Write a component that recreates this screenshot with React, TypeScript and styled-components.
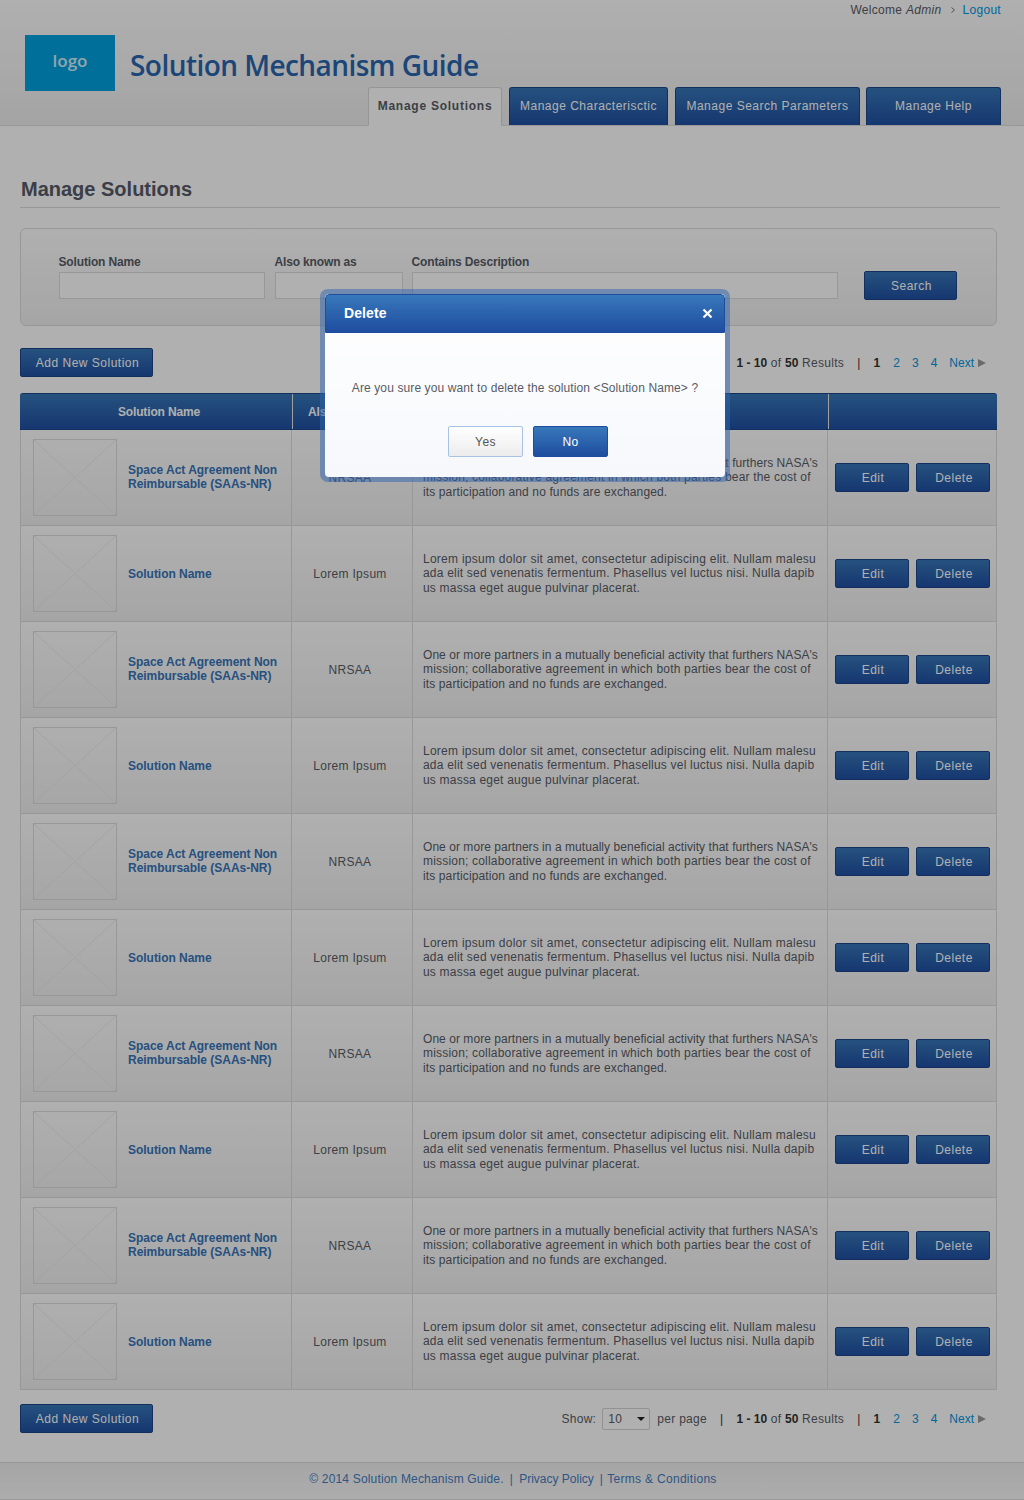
import React from "react";
import styled, { createGlobalStyle } from "styled-components";

const GlobalStyle = createGlobalStyle`
  * { box-sizing: border-box; }
  html, body { margin: 0; padding: 0; background: #fff; }
  body {
    font-family: "Liberation Sans", Arial, sans-serif;
    font-size: 12px;
    color: #585c66;
    letter-spacing: 0.3px;
  }
  a { text-decoration: none; }
`;

const Page = styled.div`
  position: relative;
  width: 1024px;
  height: 1500px;
  overflow: hidden;
`;

const Masthead = styled.header`
  height: 126px;
  background: linear-gradient(#ffffff, #eeeeee);
  border-bottom: 1px solid #dcdcdc;
`;

const TopBar = styled.div`
  height: 35px;
  padding: 3px 23px 0 0;
  display: flex;
  justify-content: flex-end;
  align-items: flex-start;
  line-height: 15px;
`;

const TopArrow = styled.svg`
  margin: 4px 7px 0 10px;
`;

const BlueLink = styled.a`
  color: #0095e0;
`;

const BrandRow = styled.div`
  height: 52px;
  padding-left: 25px;
  display: flex;
  align-items: flex-start;
`;

const Logo = styled.div`
  width: 90px;
  height: 56px;
  flex: none;
  background: #00a2e1;
  color: rgba(255, 255, 255, 0.85);
  font: 600 17px/51px "Open Sans", sans-serif;
  letter-spacing: 0;
  text-align: center;
`;

const SiteTitle = styled.h1`
  margin: 10px 0 0 15px;
  font: 600 28px/40px "Open Sans", sans-serif;
  letter-spacing: -0.55px;
  color: #2a66ae;
`;

const TabRow = styled.nav`
  height: 39px;
  padding-right: 23px;
  display: flex;
  justify-content: flex-end;
  gap: 7px;
`;

const Tab = styled.a<{ $active?: boolean; $width: number }>`
  width: ${(p) => p.$width}px;
  height: ${(p) => (p.$active ? 39 : 38)}px;
  display: flex;
  align-items: center;
  justify-content: center;
  padding-bottom: 1px;
  border-radius: 3px 3px 0 0;
  letter-spacing: ${(p) => (p.$active ? 0.75 : 0.5)}px;
  background: ${(p) => (p.$active ? "#ffffff" : "linear-gradient(#3777b8, #2050a3)")};
  border: 1px solid ${(p) => (p.$active ? "#d8d8d8" : "#1c4488")};
  border-bottom: ${(p) => (p.$active ? "1px solid #fff" : "0")};
  color: ${(p) => (p.$active ? "#585c66" : "#fff")};
  font-weight: ${(p) => (p.$active ? "bold" : "normal")};
  &:last-child { margin-left: -1px; }
`;

const Main = styled.main`
  padding: 0 27px 0 20px;
`;

const PageHeading = styled.h2`
  width: 980px;
  height: 82px;
  margin: 0 0 20px;
  padding: 50px 0 0 1px;
  border-bottom: 1px solid #dcdcdc;
  font: bold 20px/26px "Liberation Sans", Arial, sans-serif;
  letter-spacing: 0;
  color: #565a68;
`;

const SearchPanel = styled.section`
  height: 98px;
  padding: 26px 39px 0 38px;
  display: flex;
  align-items: flex-start;
  gap: 10px;
  border: 1px solid #dcdcdc;
  border-radius: 6px;
  background: linear-gradient(#ffffff, #f0f0f0);
`;

const Field = styled.label<{ $width: number }>`
  width: ${(p) => p.$width}px;
  display: block;
  flex: none;
  font-weight: bold;
  line-height: 14px;
  letter-spacing: -0.15px;
  text-indent: -0.5px;
  &:nth-child(2) { margin-right: -1px; }
`;

const TextBox = styled.div`
  height: 27px;
  margin-top: 3px;
  border: 1px solid #dcdcdc;
  background: #fff;
`;

const Button = styled.button<{ $width: number }>`
  width: ${(p) => p.$width}px;
  height: 29px;
  flex: none;
  padding: 1px 0 0 2px;
  border: 1px solid #1c4488;
  border-radius: 2px;
  background: linear-gradient(#3777b8, #2050a3);
  color: #fff;
  font: 12px "Liberation Sans", Arial, sans-serif;
  letter-spacing: 0.5px;
`;

const SearchButton = styled(Button)`
  margin: 16px 0 0 16px;
`;

const ToolRow = styled.div<{ $last?: boolean }>`
  height: 29px;
  margin: ${(p) => (p.$last ? "14px 0 0" : "22px 0 16px")};
  display: flex;
  align-items: center;
  justify-content: space-between;
`;

const Pager = styled.div`
  display: flex;
  align-items: center;
  padding-right: 11px;
`;

const PagerSplit = styled.span`
  margin: 0 13px;
  color: #333;
`;

const PagerStrong = styled.b`
  color: #333;
  letter-spacing: 0;
`;

const PageNumber = styled.span`
  margin-left: 12px;
  color: #0095e0;
  letter-spacing: 0;
`;

const CurrentPage = styled(PageNumber)`
  margin: 0 1px 0 0;
  color: #333;
  font-weight: bold;
`;

const NextArrow = styled.svg`
  margin-left: 4px;
`;

const SelectBox = styled.div`
  width: 48px;
  height: 22px;
  margin-left: 6px;
  padding: 0 4px 0 5px;
  display: flex;
  align-items: center;
  justify-content: space-between;
  border: 1px solid #d4d4d4;
  border-radius: 2px;
`;

const ShowText = styled.span`
  margin-left: 7px;
`;

const HeadRow = styled.div`
  height: 37px;
  display: grid;
  grid-template-columns: 272px 121px 415px 1fr;
  border-radius: 3px 3px 0 0;
  border: 1px solid #1c4488;
  border-width: 1px 0;
  background: linear-gradient(#3777b8, #2050a3);
`;

const HeadCell = styled.div`
  display: flex;
  align-items: center;
  justify-content: center;
  padding-top: 1px;
  color: #fff;
  font-weight: bold;
  letter-spacing: -0.15px;
  white-space: nowrap;
  & + & { border-left: 1px solid #e8e8e8; }
  &:first-child { padding-left: 6px; }
  &:nth-child(2) { padding-right: 8px; }
`;

const Row = styled.div`
  height: 96px;
  display: grid;
  grid-template-columns: 270px 121px 415px 1fr;
  border: 1px solid #dcdcdc;
  border-top: 0;
  background: linear-gradient(#ffffff, #f0f0f0);
`;

const NameCell = styled.div`
  padding: 0 0 1px 12px;
  display: flex;
  align-items: center;
  gap: 11px;
`;

const Thumb = styled.svg`
  flex: none;
  display: block;
`;

const SolutionLink = styled.a<{ $single: boolean }>`
  display: block;
  padding-top: ${(p) => (p.$single ? 2 : 0)}px;
  color: #3674b8;
  font-weight: bold;
  line-height: 14px;
  letter-spacing: -0.03px;
`;

const AkaCell = styled.div`
  display: flex;
  align-items: center;
  justify-content: center;
  border-left: 1px solid #dcdcdc;
  padding: 1px 4px 0 0;
`;

const DescCell = styled.div`
  display: flex;
  align-items: center;
  padding: 0.2px 0 0 10px;
  border-left: 1px solid #dcdcdc;
  line-height: 14.4px;
  white-space: nowrap;
`;

const DescLine = styled.div<{ $track: number }>`
  letter-spacing: ${(p) => p.$track}px;
`;

const ActionCell = styled.div`
  display: flex;
  align-items: center;
  gap: 7px;
  padding-left: 7px;
  border-left: 1px solid #dcdcdc;
`;

const Footer = styled.footer`
  height: 38px;
  margin-top: 29px;
  display: flex;
  align-items: center;
  justify-content: center;
  gap: 6px;
  padding: 0 0 4px 2px;
  border-top: 1px solid #dcdcdc;
  border-bottom: 1px solid #dcdcdc;
  background: linear-gradient(#f0f0f0, #fafafa);
  color: #447dc2;
`;

const FooterLink = styled.a<{ $track: number }>`
  color: #447dc2;
  letter-spacing: ${(p) => p.$track}px;
  &:last-child { margin-left: -2px; }
`;

const Overlay = styled.div`
  position: absolute;
  inset: 0;
  background: rgba(0, 0, 0, 0.31);
`;

const ModalFrame = styled.div`
  position: absolute;
  left: 320px;
  top: 289px;
  width: 410px;
  height: 193px;
  padding: 5px;
  border-radius: 8px;
  background: rgba(48, 100, 175, 0.5);
`;

const ModalBox = styled.div`
  height: 100%;
  border-radius: 4px;
  overflow: hidden;
  background: linear-gradient(#ffffff, #f6f8fc);
`;

const ModalHead = styled.div`
  height: 39px;
  padding: 0 11px 1px 18px;
  display: flex;
  align-items: center;
  justify-content: space-between;
  border: 1px solid #1e4d9f;
  border-radius: 4px 4px 0 0;
  background: linear-gradient(#3878bb, #1e4d9f);
  color: #fff;
  font-size: 14px;
  font-weight: bold;
  letter-spacing: 0.1px;
`;

const ModalText = styled.p`
  margin: 48px 0 31px;
  line-height: 14px;
  text-align: center;
  letter-spacing: 0.11px;
  color: #585c66;
`;

const ModalActions = styled.div`
  padding-left: 6px;
  display: flex;
  justify-content: center;
  gap: 10px;
`;

const YesButton = styled.button`
  width: 75px;
  height: 31px;
  padding: 0;
  border: 1px solid #a6c3e6;
  border-radius: 2px;
  background: linear-gradient(#ffffff, #ececec);
  color: #555;
  font: 12px "Liberation Sans", Arial, sans-serif;
  letter-spacing: 0.4px;
`;

const NoButton = styled(YesButton)`
  border-color: #1e4d9f;
  background: linear-gradient(#3878bb, #1e4d9f);
  color: #fff;
`;

// tracking per line: the reference's hinted Arial runs a different width on each line
const descriptions = {
  space: [
    { text: "One or more partners in a mutually beneficial activity that furthers NASA's", track: 0.05 },
    { text: "mission; collaborative agreement in which both parties bear the cost of", track: 0.19 },
    { text: "its participation and no funds are exchanged.", track: 0.12 },
  ],
  lorem: [
    { text: "Lorem ipsum dolor sit amet, consectetur adipiscing elit. Nullam malesu", track: 0.26 },
    { text: "ada elit sed venenatis fermentum. Phasellus vel luctus nisi. Nulla dapib", track: 0.2 },
    { text: "us massa eget augue pulvinar placerat.", track: 0.2 },
  ],
};

const rows = Array.from({ length: 10 }, (_, i) => i);

const ThumbIcon = () => (
  <Thumb width="84" height="77" viewBox="0 0 84 77">
    <rect x="0.5" y="0.5" width="83" height="76" fill="none" stroke="#dcdcdc" />
    <path d="M1 1L83 76M83 1L1 76" stroke="#ececec" fill="none" />
  </Thumb>
);

const Pagination = () => (
  <>
    <span>
      <PagerStrong>1 - 10</PagerStrong> of <PagerStrong>50</PagerStrong> Results
    </span>
    <PagerSplit>|</PagerSplit>
    <CurrentPage>1</CurrentPage>
    <PageNumber>2</PageNumber>
    <PageNumber>3</PageNumber>
    <PageNumber>4</PageNumber>
    <PageNumber>Next</PageNumber>
    <NextArrow width="8" height="8" viewBox="0 0 8 8">
      <path d="M0 0L8 4L0 8Z" fill="#9a9a9a" />
    </NextArrow>
  </>
);

const App: React.FC = () => {
  return (
    <Page>
      <GlobalStyle />
      <Masthead>
        <TopBar>
          <span>
            Welcome <em>Admin</em>
          </span>
          <TopArrow width="4" height="6" viewBox="0 0 4 6">
            <path d="M0.5 0.5L3.5 3L0.5 5.5" stroke="#777" fill="none" />
          </TopArrow>
          <BlueLink href="#">Logout</BlueLink>
        </TopBar>
        <BrandRow>
          <Logo>logo</Logo>
          <SiteTitle>Solution Mechanism Guide</SiteTitle>
        </BrandRow>
        <TabRow>
          <Tab $active $width={134}>Manage Solutions</Tab>
          <Tab $width={159}>Manage Characterisctic</Tab>
          <Tab $width={185}>Manage Search Parameters</Tab>
          <Tab $width={135}>Manage Help</Tab>
        </TabRow>
      </Masthead>

      <Main>
        <PageHeading>Manage Solutions</PageHeading>
        <SearchPanel>
          <Field $width={206}>
            Solution Name
            <TextBox />
          </Field>
          <Field $width={128}>
            Also known as
            <TextBox />
          </Field>
          <Field $width={426}>
            Contains Description
            <TextBox />
          </Field>
          <SearchButton $width={93}>Search</SearchButton>
        </SearchPanel>

        <ToolRow>
          <Button $width={133}>Add New Solution</Button>
          <Pager>
            <Pagination />
          </Pager>
        </ToolRow>

        <section>
          <HeadRow>
            <HeadCell>Solution Name</HeadCell>
            <HeadCell>Also known as</HeadCell>
            <HeadCell>Description</HeadCell>
            <HeadCell />
          </HeadRow>
          {rows.map((i) => {
            const isSpace = i % 2 === 0;
            return (
              <Row key={i}>
                <NameCell>
                  <ThumbIcon />
                  <SolutionLink href="#" $single={!isSpace}>
                    {isSpace ? (
                      <>
                        Space Act Agreement Non
                        <br />
                        Reimbursable (SAAs-NR)
                      </>
                    ) : (
                      "Solution Name"
                    )}
                  </SolutionLink>
                </NameCell>
                <AkaCell>{isSpace ? "NRSAA" : "Lorem Ipsum"}</AkaCell>
                <DescCell>
                  <div>
                    {(isSpace ? descriptions.space : descriptions.lorem).map((line) => (
                      <DescLine key={line.text} $track={line.track}>{line.text}</DescLine>
                    ))}
                  </div>
                </DescCell>
                <ActionCell>
                  <Button $width={74}>Edit</Button>
                  <Button $width={74}>Delete</Button>
                </ActionCell>
              </Row>
            );
          })}
        </section>

        <ToolRow $last>
          <Button $width={133}>Add New Solution</Button>
          <Pager>
            <span>Show:</span>
            <SelectBox>
              10
              <svg width="8" height="4" viewBox="0 0 8 4">
                <path d="M0 0H8L4 4Z" fill="#222" />
              </svg>
            </SelectBox>
            <ShowText>per page</ShowText>
            <PagerSplit>|</PagerSplit>
            <Pagination />
          </Pager>
        </ToolRow>
      </Main>

      <Footer>
        <FooterLink href="#" $track={0.17}>© 2014 Solution Mechanism Guide.</FooterLink>
        <span>|</span>
        <FooterLink href="#" $track={0}>Privacy Policy</FooterLink>
        <span>|</span>
        <FooterLink href="#" $track={0.3}>Terms &amp; Conditions</FooterLink>
      </Footer>

      <Overlay />
      <ModalFrame>
        <ModalBox>
          <ModalHead>
            Delete
            <svg width="11" height="11" viewBox="0 0 11 11">
              <path d="M1.5 1.5L9.5 9.5M9.5 1.5L1.5 9.5" stroke="#fff" strokeWidth="2.2" fill="none" />
            </svg>
          </ModalHead>
          <ModalText>Are you sure you want to delete the solution &lt;Solution Name&gt; ?</ModalText>
          <ModalActions>
            <YesButton>Yes</YesButton>
            <NoButton>No</NoButton>
          </ModalActions>
        </ModalBox>
      </ModalFrame>
    </Page>
  );
};

export default App;
